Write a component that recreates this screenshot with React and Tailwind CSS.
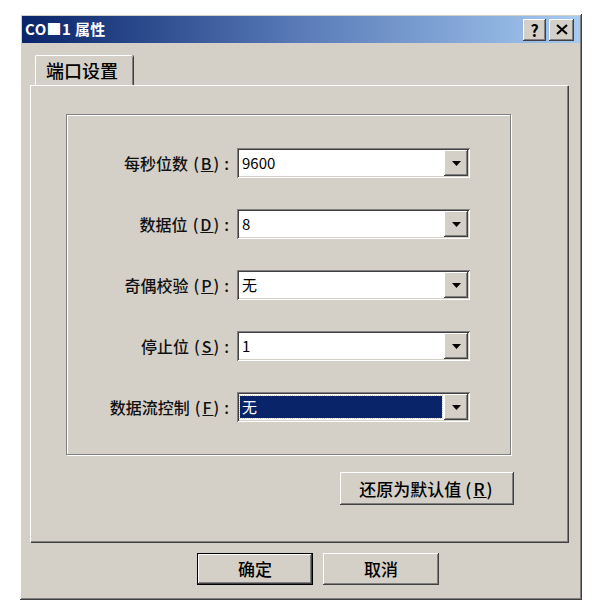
import React from "react";

const raised =
  "shadow-[inset_-1px_-1px_#404040,inset_1px_1px_#ffffff,inset_-2px_-2px_#808080,inset_2px_2px_#d4d0c8]";
const sunken =
  "shadow-[inset_1px_1px_#808080,inset_-1px_-1px_#ffffff,inset_2px_2px_#404040,inset_-2px_-2px_#d4d0c8]";

const rows = [
  { label: "每秒位数", key: "B", value: "9600" },
  { label: "数据位", key: "D", value: "8" },
  { label: "奇偶校验", key: "P", value: "无" },
  { label: "停止位", key: "S", value: "1" },
  { label: "数据流控制", key: "F", value: "无", selected: true },
];

function Combo({ value, selected }) {
  return (
    <div className={`relative flex h-[30px] w-[233px] items-center bg-white p-[2px] ${sunken}`}>
      <div className="flex h-full flex-1 items-center pl-[1px] pr-[2px] py-[2px]">
        <div
          className={`flex h-full w-full items-center pl-[2px] text-[15px] ${
            selected ? "bg-[#0a246a] text-white outline-1 outline-dotted outline-[#d4d0c8]" : "text-black"
          }`}
        >
          {value}
        </div>
      </div>
      <div className={`flex h-full w-[24px] items-center justify-center bg-[#d4d0c8] ${raised}`}>
        <svg width="9" height="5" viewBox="0 0 9 5">
          <path d="M0 0h9L4.5 5z" fill="#000" />
        </svg>
      </div>
    </div>
  );
}

function Button({ children, className = "", def }) {
  return (
    <div
      className={`flex items-center justify-center bg-[#d4d0c8] text-[17px] font-medium text-black ${
        def ? "border border-black" : ""
      } ${raised} ${className}`}
    >
      {children}
    </div>
  );
}

export default function App() {
  return (
    <div
      className="h-[603px] w-[608px] overflow-hidden bg-white pl-[20px] pt-[14px]"
      style={{ fontFamily: '"Noto Sans CJK SC", "Liberation Sans", sans-serif' }}
    >
      <div className={`flex h-[586px] w-[562px] flex-col bg-[#d4d0c8] p-[2px] ${raised}`}>
        {/* title bar */}
        <div className="flex h-[27px] items-center justify-between bg-gradient-to-r from-[#0a246a] via-[#5a7bb8] to-[#a6caf0] pl-[3px] pr-[6px]">
          <span className="text-[15px] font-bold tracking-wide text-white">CO■1 属性</span>
          <div className="flex gap-[3px]">
            <div className={`flex h-[22px] w-[23px] items-center justify-center bg-[#d4d0c8] text-[16px] font-bold leading-none ${raised}`}>
              ?
            </div>
            <div className={`flex h-[22px] w-[25px] items-center justify-center bg-[#d4d0c8] ${raised}`}>
              <svg width="12" height="11" viewBox="0 0 12 11">
                <path d="M1 1l10 9M11 1L1 10" stroke="#000" strokeWidth="2.2" />
              </svg>
            </div>
          </div>
        </div>

        {/* tabs */}
        <div className="ml-[13px] mt-[12px] flex">
          <div className="flex h-[30px] w-[98px] items-center border-l border-t border-white pl-[10px] text-[18px] font-medium text-black shadow-[inset_-1px_0_#808080,1px_0_#404040] rounded-t-[2px]">
            端口设置
          </div>
        </div>

        {/* panel */}
        <div className="ml-[8px] flex h-[457px] w-[538px] flex-col border-l border-t border-white shadow-[inset_-1px_-1px_#808080,1px_1px_#404040]">
          <div className="ml-[35px] mt-[28px] flex h-[341px] w-[445px] flex-col gap-[31px] border border-[#808080] pt-[33px] shadow-[inset_1px_1px_#ffffff,1px_1px_#ffffff]">
            {rows.map((r) => (
              <div key={r.key} className="flex items-center">
                <div className="w-[170px] pr-[8px] text-right text-[16px] font-medium text-[#111]">
                  {r.label}
                  <span className="ml-[5px] tracking-[2px]">
                    (<span className="underline">{r.key}</span>)
                  </span>
                  <span className="ml-[3px]">:</span>
                </div>
                <Combo value={r.value} selected={r.selected} />
              </div>
            ))}
          </div>
          <div className="flex justify-end pr-[54px] pt-[17px]">
            <Button className="h-[33px] w-[174px]">
              还原为默认值
              <span className="ml-[4px] tracking-[2px]">
                (<span className="underline">R</span>)
              </span>
            </Button>
          </div>
        </div>

        {/* bottom buttons */}
        <div className="ml-[175px] mt-[11px] flex gap-[10px]">
          <Button def className="h-[32px] w-[116px]">
            确定
          </Button>
          <Button className="h-[32px] w-[116px]">取消</Button>
        </div>
      </div>
    </div>
  );
}
